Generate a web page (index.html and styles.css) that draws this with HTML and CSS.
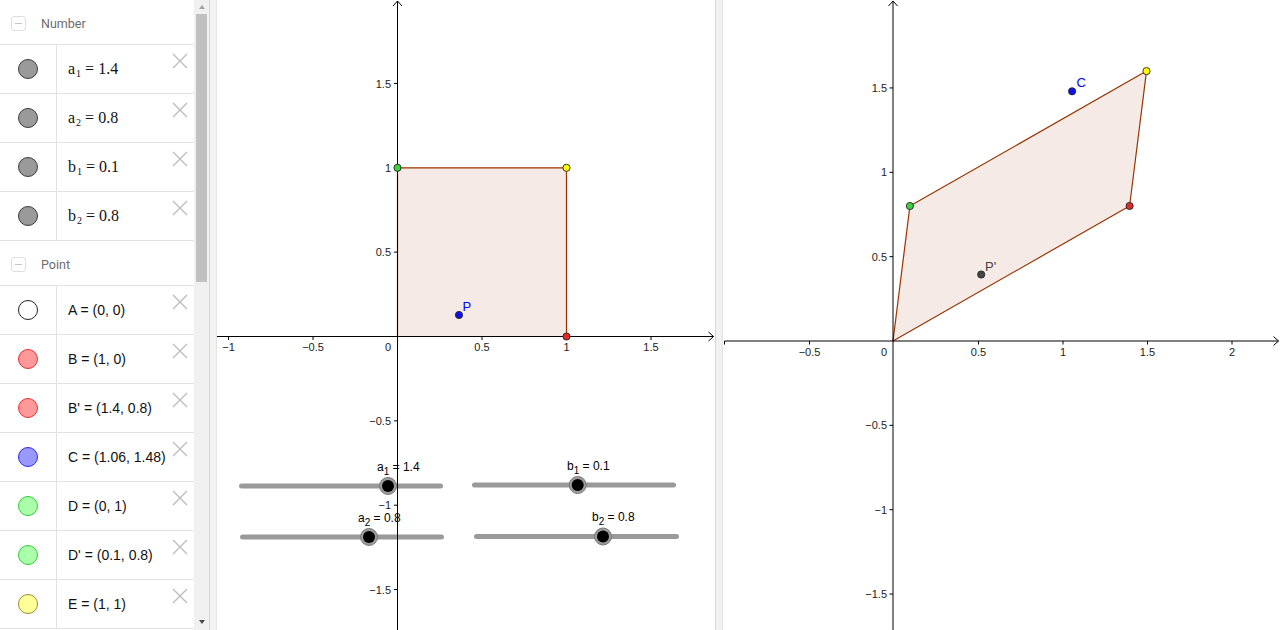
FILE: index.html
```html
<!DOCTYPE html>
<html>
<head>
<meta charset="utf-8">
<link rel="stylesheet" href="styles.css">
</head>
<body>
<div class="app">
  <aside class="algebra">
    <div class="alg-list">
      <div class="group-head"><span class="toggle"><span class="minus"></span></span><span class="group-title">Number</span></div>
      <div class="row"><div class="icon-cell"><span class="dot dot-grey"></span></div><div class="text-cell num"><span>a<sub>1</sub> = 1.4</span></div><svg class="del" viewBox="0 0 16 16"><path d="M1 1L15 15M15 1L1 15"/></svg></div>
      <div class="row"><div class="icon-cell"><span class="dot dot-grey"></span></div><div class="text-cell num"><span>a<sub>2</sub> = 0.8</span></div><svg class="del" viewBox="0 0 16 16"><path d="M1 1L15 15M15 1L1 15"/></svg></div>
      <div class="row"><div class="icon-cell"><span class="dot dot-grey"></span></div><div class="text-cell num"><span>b<sub>1</sub> = 0.1</span></div><svg class="del" viewBox="0 0 16 16"><path d="M1 1L15 15M15 1L1 15"/></svg></div>
      <div class="row"><div class="icon-cell"><span class="dot dot-grey"></span></div><div class="text-cell num"><span>b<sub>2</sub> = 0.8</span></div><svg class="del" viewBox="0 0 16 16"><path d="M1 1L15 15M15 1L1 15"/></svg></div>
      <div class="group-head"><span class="toggle"><span class="minus"></span></span><span class="group-title">Point</span></div>
      <div class="row"><div class="icon-cell"><span class="dot dot-white"></span></div><div class="text-cell pt"><span>A = (0, 0)</span></div><svg class="del" viewBox="0 0 16 16"><path d="M1 1L15 15M15 1L1 15"/></svg></div>
      <div class="row"><div class="icon-cell"><span class="dot dot-red"></span></div><div class="text-cell pt"><span>B = (1, 0)</span></div><svg class="del" viewBox="0 0 16 16"><path d="M1 1L15 15M15 1L1 15"/></svg></div>
      <div class="row"><div class="icon-cell"><span class="dot dot-red"></span></div><div class="text-cell pt"><span>B' = (1.4, 0.8)</span></div><svg class="del" viewBox="0 0 16 16"><path d="M1 1L15 15M15 1L1 15"/></svg></div>
      <div class="row"><div class="icon-cell"><span class="dot dot-blue"></span></div><div class="text-cell pt"><span>C = (1.06, 1.48)</span></div><svg class="del" viewBox="0 0 16 16"><path d="M1 1L15 15M15 1L1 15"/></svg></div>
      <div class="row"><div class="icon-cell"><span class="dot dot-green"></span></div><div class="text-cell pt"><span>D = (0, 1)</span></div><svg class="del" viewBox="0 0 16 16"><path d="M1 1L15 15M15 1L1 15"/></svg></div>
      <div class="row"><div class="icon-cell"><span class="dot dot-green"></span></div><div class="text-cell pt"><span>D' = (0.1, 0.8)</span></div><svg class="del" viewBox="0 0 16 16"><path d="M1 1L15 15M15 1L1 15"/></svg></div>
      <div class="row"><div class="icon-cell"><span class="dot dot-yellow"></span></div><div class="text-cell pt"><span>E = (1, 1)</span></div><svg class="del" viewBox="0 0 16 16"><path d="M1 1L15 15M15 1L1 15"/></svg></div>
    </div>
    <div class="scrollbar">
      <div class="arrow-box top"><span class="arrow up"></span></div>
      <div class="thumb"></div>
      <div class="spacer"></div>
      <div class="arrow-box bottom"><span class="arrow down"></span></div>
    </div>
  </aside>
  <div class="splitter"></div>
  <section class="graph graph-left">
    <svg class="canvas" width="498" height="630" viewBox="0 0 498 630">
      <polygon class="poly" points="180.5,336.5 349.5,336.5 349.5,167.8 180.5,167.8"/>

      <line class="track" x1="24.5" y1="486" x2="223.5" y2="486"/>
      <circle class="knob-ring" cx="171" cy="486" r="8.5"/><circle class="knob" cx="171" cy="486" r="6"/>
      <text class="slabel" x="160" y="470.5">a<tspan class="ssub" dy="4">1</tspan><tspan dy="-4"> = 1.4</tspan></text>

      <line class="track" x1="257.5" y1="485" x2="456.5" y2="485"/>
      <circle class="knob-ring" cx="360.7" cy="485" r="8.5"/><circle class="knob" cx="360.7" cy="485" r="6"/>
      <text class="slabel" x="350" y="470">b<tspan class="ssub" dy="4">1</tspan><tspan dy="-4"> = 0.1</tspan></text>

      <line class="track" x1="25.5" y1="537" x2="224.5" y2="537"/>
      <circle class="knob-ring" cx="152" cy="537" r="8.5"/><circle class="knob" cx="152" cy="537" r="6"/>
      <text class="slabel" x="141" y="521.5">a<tspan class="ssub" dy="4">2</tspan><tspan dy="-4"> = 0.8</tspan></text>

      <line class="track" x1="259.5" y1="536.5" x2="459.5" y2="536.5"/>
      <circle class="knob-ring" cx="386" cy="536.5" r="8.5"/><circle class="knob" cx="386" cy="536.5" r="6"/>
      <text class="slabel" x="375" y="521">b<tspan class="ssub" dy="4">2</tspan><tspan dy="-4"> = 0.8</tspan></text>

      <line class="axis" x1="0" y1="336.5" x2="496.5" y2="336.5"/>
      <polyline class="axis" points="491.5,332 496.5,336.5 491.5,341"/>
      <line class="axis" x1="180.5" y1="630" x2="180.5" y2="1"/>
      <polyline class="axis" points="176,6 180.5,1 185,6"/>

      <path class="axis" d="M11.5 336.5V340M96 336.5V340M265 336.5V340M349.5 336.5V340M434 336.5V340M177 252.15H180.5M177 167.8H180.5M177 83.45H180.5M177 420.85H180.5M177 505.2H180.5M177 589.55H180.5"/>

      <text class="lbl mid" x="11.5" y="351">−1</text>
      <text class="lbl mid" x="96" y="351">−0.5</text>
      <text class="lbl mid" x="171" y="351">0</text>
      <text class="lbl mid" x="265" y="351">0.5</text>
      <text class="lbl mid" x="349.5" y="351">1</text>
      <text class="lbl mid" x="434" y="351">1.5</text>
      <text class="lbl end" x="174" y="256">0.5</text>
      <text class="lbl end" x="174" y="171.8">1</text>
      <text class="lbl end" x="174" y="87.5">1.5</text>
      <text class="lbl end" x="174" y="424.9">−0.5</text>
      <text class="lbl end" x="174" y="509.2">−1</text>
      <text class="lbl end" x="174" y="593.6">−1.5</text>

      <circle class="pt pt-green" cx="180.5" cy="167.8" r="3.6"/>
      <circle class="pt pt-yellow" cx="349.5" cy="167.8" r="3.6"/>
      <circle class="pt pt-red" cx="349.5" cy="336.5" r="3.6"/>
      <circle class="pt pt-blue" cx="242" cy="315" r="3.6"/>
      <text class="plabel blue" x="245.5" y="311">P</text>
    </svg>
  </section>
  <div class="splitter"></div>
  <section class="graph graph-right">
    <svg class="canvas" width="557" height="630" viewBox="0 0 557 630">
      <polygon class="poly" points="170,341 406.6,206 423.5,71.1 186.9,206"/>

      <line class="axis" x1="1.5" y1="341" x2="555.5" y2="341"/>
      <polyline class="axis" points="550.5,336.5 555.5,341 550.5,345.5"/>
      <line class="axis" x1="170" y1="630" x2="170" y2="1"/>
      <polyline class="axis" points="165.5,6 170,1 174.5,6"/>

      <path class="axis" d="M1.5 341V344.5M86.5 341V344.5M255.5 341V344.5M340 341V344.5M424.5 341V344.5M509 341V344.5M166.5 256.65H170M166.5 172.3H170M166.5 87.95H170M166.5 425.35H170M166.5 509.7H170M166.5 594.05H170"/>

      <text class="lbl mid" x="86.5" y="355.5">−0.5</text>
      <text class="lbl mid" x="161" y="355.5">0</text>
      <text class="lbl mid" x="255.5" y="355.5">0.5</text>
      <text class="lbl mid" x="340" y="355.5">1</text>
      <text class="lbl mid" x="424.5" y="355.5">1.5</text>
      <text class="lbl mid" x="509" y="355.5">2</text>
      <text class="lbl end" x="164" y="260.6">0.5</text>
      <text class="lbl end" x="164" y="176.3">1</text>
      <text class="lbl end" x="164" y="92">1.5</text>
      <text class="lbl end" x="164" y="429.4">−0.5</text>
      <text class="lbl end" x="164" y="513.7">−1</text>
      <text class="lbl end" x="164" y="598">−1.5</text>

      <circle class="pt pt-green" cx="186.9" cy="206" r="3.6"/>
      <circle class="pt pt-yellow" cx="423.5" cy="71.1" r="3.6"/>
      <circle class="pt pt-red" cx="406.6" cy="206" r="3.6"/>
      <circle class="pt pt-blue" cx="349.1" cy="91.3" r="3.6"/>
      <text class="plabel blue" x="353.5" y="87">C</text>
      <circle class="pt pt-dark" cx="258.2" cy="274.5" r="3.6"/>
      <text class="plabel dark" x="262" y="270.5">P'</text>
    </svg>
  </section>
</div>
</body>
</html>
```
FILE: styles.css
```css
html, body {
  margin: 0;
  padding: 0;
  background: #ffffff;
  overflow: hidden;
}

.app {
  display: flex;
  width: 1280px;
  height: 630px;
  font-family: "Liberation Sans", Arial, sans-serif;
}

/* ---------- Algebra view ---------- */
.algebra {
  display: flex;
  width: 209px;
  height: 630px;
  flex: none;
}

.alg-list {
  width: 194px;
  height: 630px;
  overflow: hidden;
  background: #ffffff;
}

.group-head {
  display: flex;
  align-items: center;
  height: 44px;
  border-bottom: 1px solid #e2e2e2;
  box-sizing: content-box;
}

.toggle {
  display: flex;
  align-items: center;
  justify-content: center;
  width: 13px;
  height: 13px;
  margin-left: 11px;
  margin-top: 2px;
  border: 1px solid #dedede;
  border-radius: 3px;
}

.minus {
  width: 7px;
  height: 1px;
  background: #c4c4c4;
}

.group-title {
  margin-left: 15px;
  margin-top: 2px;
  font-family: Roboto, "Noto Sans", sans-serif;
  font-size: 12.5px;
  color: #6c6c6c;
}

.row {
  display: flex;
  height: 48px;
  border-bottom: 1px solid #e2e2e2;
}

.icon-cell {
  display: flex;
  align-items: center;
  justify-content: center;
  width: 56px;
  flex: none;
  border-right: 1px solid #e2e2e2;
}

.dot {
  width: 18px;
  height: 18px;
  border-radius: 50%;
  border: 1px solid #333;
  box-sizing: content-box;
}

.dot-grey { background: #9a9a9a; border-color: #3a3a3a; }
.dot-white { background: #ffffff; border-color: #222; }
.dot-red { background: #ff9999; border-color: #e63030; }
.dot-blue { background: #9999ff; border-color: #2a2aee; }
.dot-green { background: #aaffaa; border-color: #33cc33; }
.dot-yellow { background: #ffff99; border-color: #a08a30; }

.text-cell {
  flex: 1;
  display: flex;
  align-items: center;
  padding-left: 11px;
  white-space: nowrap;
  color: #111;
}

.num {
  font-family: "Liberation Serif", "Times New Roman", serif;
  font-size: 16px;
}

.num sub {
  font-size: 10px;
  line-height: 0;
  vertical-align: -3px;
  margin-left: 1px;
}

.pt {
  font-family: "Liberation Sans", Arial, sans-serif;
  font-size: 14px;
}

.del {
  flex: none;
  width: 16px;
  height: 16px;
  margin: 8px 6px 0 0;
  fill: none;
  stroke: #bdbdbd;
  stroke-width: 1.4;
}

/* ---------- Scrollbar ---------- */
.scrollbar {
  display: flex;
  flex-direction: column;
  width: 15px;
  height: 630px;
  background: #f0f0f0;
  flex: none;
}

.arrow-box {
  display: flex;
  justify-content: center;
  align-items: center;
  height: 14px;
  flex: none;
}

.arrow-box.bottom {
  height: 16px;
}

.arrow {
  width: 0;
  height: 0;
  border-left: 3.5px solid transparent;
  border-right: 3.5px solid transparent;
}

.arrow.up { border-bottom: 4px solid #a3a3a3; }
.arrow.down { border-top: 4px solid #4a4a4a; }

.thumb {
  width: 11px;
  height: 268px;
  margin-left: 2px;
  background: #c1c1c1;
  flex: none;
}

.spacer { flex: 1; }

/* ---------- Splitters ---------- */
.splitter {
  width: 6px;
  height: 630px;
  flex: none;
  background: #f2f2f2;
  border-left: 1px solid #d8d8d8;
  border-right: 1px solid #e4e4e4;
}

/* ---------- Graphics views ---------- */
.graph {
  height: 630px;
  flex: none;
  background: #ffffff;
  overflow: hidden;
}

.graph-left { width: 498px; }
.graph-right { width: 557px; }

.canvas { display: block; }

.poly {
  fill: #993300;
  fill-opacity: 0.1;
  stroke: #993300;
  stroke-width: 1.2;
  stroke-linejoin: round;
}

.axis {
  fill: none;
  stroke: #000000;
  stroke-width: 1;
}

.lbl {
  font-family: "Liberation Sans", Arial, sans-serif;
  font-size: 11px;
  fill: #222222;
}

.lbl.mid { text-anchor: middle; }
.lbl.end { text-anchor: end; }

.track {
  stroke: #9a9a9a;
  stroke-width: 5;
  stroke-linecap: round;
}

.knob-ring {
  fill: #9c9c9c;
  stroke: #7a7a7a;
  stroke-width: 1;
}

.knob { fill: #000000; }

.slabel {
  font-family: "Liberation Sans", Arial, sans-serif;
  font-size: 12px;
  fill: #000000;
}

.ssub { font-size: 10px; }

.pt-green { fill: #3ed33e; }
.pt-yellow { fill: #ffff00; }
.pt-red { fill: #e02a2a; }
.pt-blue { fill: #1010ee; }
.pt-dark { fill: #444444; }

circle.pt {
  stroke: #222;
  stroke-width: 0.9;
}

.plabel {
  font-family: "Liberation Sans", Arial, sans-serif;
  font-size: 13px;
}

.plabel.blue { fill: #0000ff; }
.plabel.dark { fill: #444444; }
```
